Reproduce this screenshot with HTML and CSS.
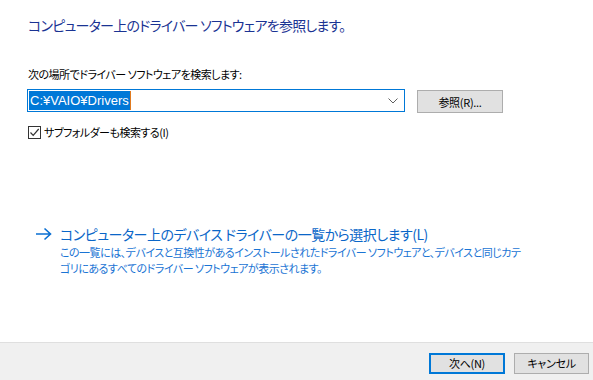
FILE: index.html
```html
<!DOCTYPE html>
<html lang="ja">
  <head>
    <meta charset="UTF-8" />
    <meta name="viewport" content="width=device-width, initial-scale=1.0" />
    <title>ドライバー ソフトウェアの更新</title>
    <link rel="stylesheet" href="styles.css">
  </head>
  <body>
    <div class="main">
      <h1>コンピューター上のドライバー ソフトウェアを参照します。</h1>

      <p class="label">次の場所でドライバー ソフトウェアを検索します:</p>
      <div class="path-row">
        <div class="combo">
          <span class="selected">C:¥VAIO¥Drivers</span><span class="caret"></span>
          <svg class="chevron" width="10" height="6" viewBox="0 0 10 6">
            <path d="M0.5 0.5 L5 5 L9.5 0.5" fill="none" stroke="#606060" stroke-width="1" />
          </svg>
        </div>
        <button class="btn browse">参照(R)...</button>
      </div>

      <label class="check">
        <span class="box">
          <svg width="11" height="11" viewBox="0 0 11 11">
            <path d="M1.5 5.5 L4.2 8.3 L9.7 2" fill="none" stroke="#333" stroke-width="1.2" />
          </svg>
        </span>
        サブフォルダーも検索する(I)
      </label>

      <div class="command">
        <div class="command-title">
          <svg class="arrow" width="17" height="14" viewBox="0 0 17 14">
            <path d="M1 7 H15 M9.5 1.5 L15.5 7 L9.5 12.5" fill="none" stroke="#0a6fd2" stroke-width="1.6" />
          </svg>
          <span>コンピューター上のデバイス ドライバーの一覧から選択します(L)</span>
        </div>
        <p class="command-note">この一覧には、デバイスと互換性があるインストールされたドライバー ソフトウェアと、デバイスと同じカテ<br>ゴリにあるすべてのドライバー ソフトウェアが表示されます。</p>
      </div>
    </div>

    <div class="footer">
      <button class="btn next">次へ(N)</button>
      <button class="btn">キャンセル</button>
    </div>
  </body>
</html>
```

FILE: styles.css
```css
body {
  margin: 0;
  width: 593px;
  height: 380px;
  background-color: #fff;
  font-family: "Noto Sans CJK JP", "Noto Sans", sans-serif;
  font-feature-settings: "palt";
  font-size: 11px;
  letter-spacing: -0.5px;
  color: #000;
  display: flex;
  flex-direction: column;
  overflow: hidden;
}
.main {
  height: 342px;
  box-sizing: border-box;
  padding: 14px 0 0 28px;
}
h1 {
  margin: 0;
  font-size: 14px;
  letter-spacing: -0.75px;
  font-weight: normal;
  line-height: 22px;
  color: #1a3393;
}
.label {
  margin: 30px 0 0 0;
  line-height: 16px;
}
.path-row {
  display: flex;
  align-items: flex-start;
  margin-top: 7px;
  margin-left: -1px;
}
.combo {
  width: 378px;
  height: 23px;
  box-sizing: border-box;
  border: 1px solid #0078d7;
  display: flex;
  align-items: center;
  padding-left: 1px;
  position: relative;
}
.selected {
  background-color: #0078d7;
  color: #fff;
  line-height: 19px;
  padding: 0 1px;
  font-family: "Liberation Sans", "Noto Sans CJK JP", sans-serif;
  font-size: 13px;
  letter-spacing: 0;
}
.caret {
  width: 1px;
  height: 19px;
  background-color: #e07a1f;
}
.chevron {
  position: absolute;
  right: 6px;
  top: 8px;
}
.btn {
  font-family: inherit;
  font-feature-settings: "palt";
  font-size: 11px;
  letter-spacing: -0.3px;
  color: #000;
  background-color: #e1e1e1;
  border: 1px solid #adadad;
  height: 23px;
  width: 86px;
  padding: 0;
  line-height: 20px;
}
.browse {
  margin-left: 12px;
  margin-top: 1px;
}
.check {
  display: flex;
  align-items: center;
  gap: 3px;
  margin-top: 11px;
  line-height: 16px;
}
.box {
  width: 13px;
  height: 13px;
  box-sizing: border-box;
  border: 1px solid #333;
  display: flex;
  align-items: center;
  justify-content: center;
}
.command {
  margin-top: 84px;
  color: #0a66c8;
}
.command-title {
  display: flex;
  align-items: center;
  font-size: 14px;
  letter-spacing: -0.5px;
  line-height: 20px;
  margin-left: 7px;
  gap: 8px;
}
.command-note {
  margin: 0 0 0 32px;
  line-height: 16px;
  color: #1a74d4;
}
.footer {
  flex: 1;
  background-color: #f0f0f0;
  border-top: 1px solid #dfdfdf;
  display: flex;
  justify-content: flex-end;
  align-items: flex-start;
  gap: 9px;
  padding: 10px 4px 0 0;
}
.footer .btn {
  width: 75px;
  height: 21px;
  line-height: 17px;
}
.footer .next {
  border: 2px solid #0078d7;
  width: 76px;
}
```
